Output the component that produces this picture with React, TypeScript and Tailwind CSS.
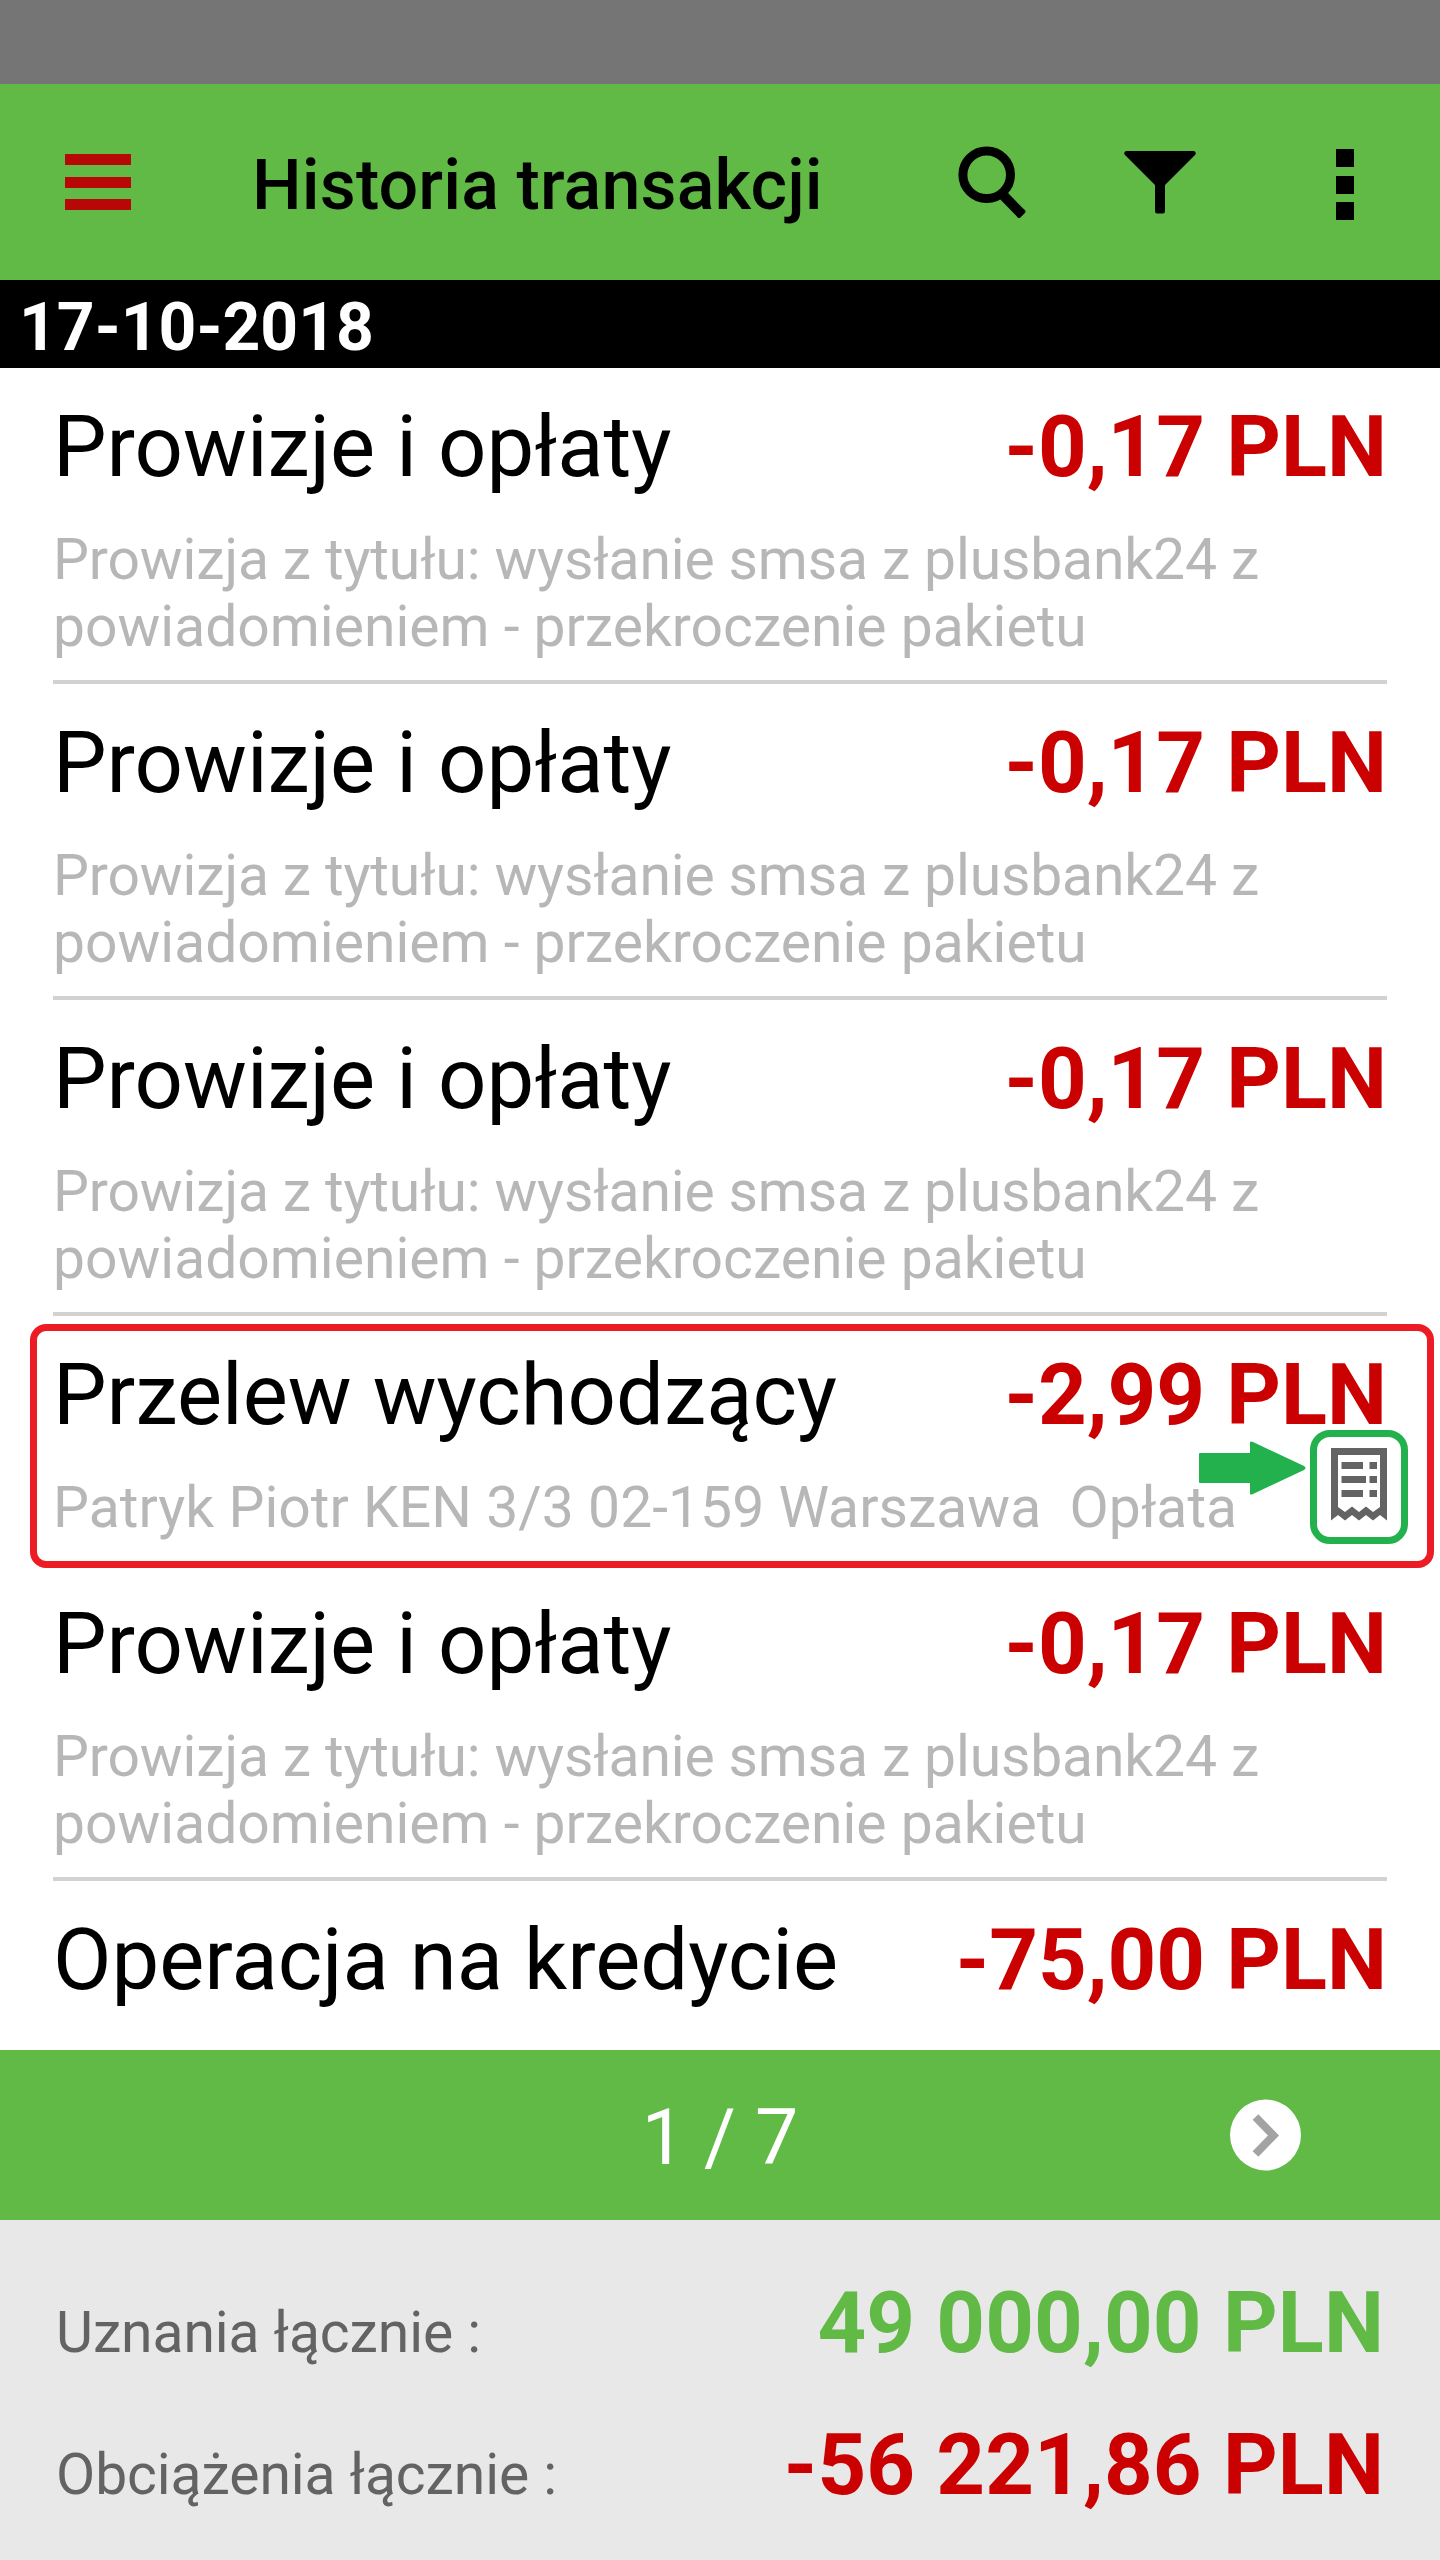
import React from "react";

const smsFee = [
  { text: "Prowizja z tytułu: wysłanie smsa z plusbank24 z", tracking: "tracking-[-0.13px]" },
  { text: "powiadomieniem - przekroczenie pakietu", tracking: "tracking-normal" },
];

const transactions = [
  { title: "Prowizje i opłaty", amount: "-0,17 PLN", description: smsFee },
  { title: "Prowizje i opłaty", amount: "-0,17 PLN", description: smsFee },
  { title: "Prowizje i opłaty", amount: "-0,17 PLN", description: smsFee },
  {
    title: "Przelew wychodzący",
    amount: "-2,99 PLN",
    description: [{ text: "Patryk Piotr KEN 3/3 02-159 Warszawa  Opłata", tracking: "tracking-[0.04px]" }],
    highlighted: true,
  },
  { title: "Prowizje i opłaty", amount: "-0,17 PLN", description: smsFee },
  { title: "Operacja na kredycie", amount: "-75,00 PLN", description: [] },
];

const totals = [
  { label: "Uznania łącznie :", value: "49 000,00 PLN", color: "text-[#61b946]" },
  { label: "Obciążenia łącznie :", value: "-56 221,86 PLN", color: "text-[#cb0000]" },
];

const SearchIcon = () => (
  <svg width="72" height="76" viewBox="0 0 72 76" fill="none" stroke="black">
    <circle cx="30.7" cy="30.8" r="23.8" strokeWidth="9" />
    <path d="M46 50L65 69.500" strokeWidth="10" />
    <path d="M67.500 67.500L63 72" strokeWidth="4" strokeLinecap="round" />
  </svg>
);

const FilterIcon = () => (
  <svg width="72" height="63" viewBox="0 0 72 63">
    <path d="M2 0H70Q73 1.500 71 4L41 34V60Q41 62.500 39 62.500H33Q31 62.500 31 60V34L1 4Q-1 1.500 2 0Z" />
  </svg>
);

const ReceiptIcon = () => (
  <svg width="56" height="73" viewBox="0 0 56 73" fill="#636363">
    <path
      fillRule="evenodd"
      d="M0 0H56V72.500L49 67L42 72.500L35 67L28 72.500L21 67L14 72.500L7 67L0 72.500ZM7 7V59L14 64L21 58.500L28 64L35 58.500L42 64L49 59V7Z"
    />
    <path d="M10.500 14H32V21H10.500ZM38.500 14H46V21H38.500ZM10.500 28H35V35H10.500ZM38.500 28H46V35H38.500ZM10.500 42H32V49H10.500ZM38.500 42H46V49H38.500Z" />
  </svg>
);

// Frame, receipt button and arrow drawn over the highlighted row
const Highlight = () => (
  <>
    <div className="absolute left-[30px] top-2 w-[1404px] h-[244px] rounded-[16px] border-[7px] border-[#ed1c24]" />
    <div className="absolute left-[1310px] top-[114px] w-[98px] h-[114px] rounded-[20px] border-[7px] border-[#22b14c] bg-white flex justify-center pt-[11px]">
      <ReceiptIcon />
    </div>
    <svg className="absolute left-[1199px] top-[125px]" width="107" height="54" viewBox="0 0 107 54" fill="#22b14c">
      <path d="M1 12H51V1Q52 0 54 1L105 25Q108 27 105 29L54 53Q52 54 51 53V42H1Q0 42 0 41V13Q0 12 1 12Z" />
    </svg>
  </>
);

const App: React.FC = () => {
  return (
    <div className="w-[1440px] h-[2560px] overflow-hidden flex flex-col bg-white font-['Roboto',sans-serif]">
      <div className="h-[84px] shrink-0 bg-[#757575]" />

      <header className="h-[196px] shrink-0 bg-[#61b946] flex items-start">
        <button className="ml-[65px] mt-[70px] w-[66px] flex flex-col gap-[11.500px]">
          <span className="h-[11px] w-full bg-[#b80707]" />
          <span className="h-[11px] w-full bg-[#b80707]" />
          <span className="h-[11px] w-full bg-[#b80707]" />
        </button>
        <h1 className="ml-[121px] mt-[60px] w-[704px] text-[70px] leading-[82px] tracking-[0.12px] font-medium text-black whitespace-nowrap">
          Historia transakcji
        </h1>
        <button className="mt-[60px]">
          <SearchIcon />
        </button>
        <button className="ml-[96px] mt-[67px]">
          <FilterIcon />
        </button>
        <button className="ml-[140px] mt-[65px] flex flex-col gap-[8.500px]">
          <span className="w-[18px] h-[18px] bg-black" />
          <span className="w-[18px] h-[18px] bg-black" />
          <span className="w-[18px] h-[18px] bg-black" />
        </button>
      </header>

      <div className="h-[88px] shrink-0 bg-black pl-[19px] text-[66px] leading-[96px] font-bold text-white">
        17-10-2018
      </div>

      <main className="flex-1 min-h-0 overflow-hidden">
        {transactions.map((item, index) => (
          <div key={index} className="relative px-[53px]">
            <div className="border-b-4 border-[#d2d2d2] pt-[28px] pb-[20px]">
              <div className="flex justify-between text-[85px] leading-[102px] whitespace-nowrap">
                <span className="text-black">{item.title}</span>
                <span className="font-bold text-[#cb0000]">{item.amount}</span>
              </div>
              <div className="mt-[28px] text-[57px] leading-[67px] text-[#b7b7b7] whitespace-pre">
                {item.description.map((line) => (
                  <p key={line.text} className={line.tracking}>{line.text}</p>
                ))}
              </div>
            </div>
            {item.highlighted && <Highlight />}
          </div>
        ))}
      </main>

      <nav className="relative h-[170px] shrink-0 bg-[#61b946] flex items-center justify-center">
        <span className="pt-[8px] text-[77px] text-white">1 / 7</span>
        <button className="absolute left-[1230px] top-[49px]">
          <svg width="72" height="72" viewBox="0 0 72 72" fill="none">
            <circle cx="35.500" cy="36" r="35.500" fill="white" />
            <path d="M25.500 18L43.500 36.500L25.500 55" stroke="#a3a3a3" strokeWidth="8" />
          </svg>
        </button>
      </nav>

      <footer className="h-[340px] shrink-0 bg-[#e8e8e8] pl-[56px] pr-[56px] pt-[52px]">
        {totals.map((item) => (
          <div key={item.label} className="h-[142px] flex items-baseline justify-between whitespace-nowrap">
            <span className="text-[57px] leading-[67px] tracking-[-0.08px] text-[#636363]">{item.label}</span>
            <span className={`text-[85px] leading-[102px] tracking-[0.1px] font-bold ${item.color}`}>{item.value}</span>
          </div>
        ))}
      </footer>
    </div>
  );
};

export default App;
